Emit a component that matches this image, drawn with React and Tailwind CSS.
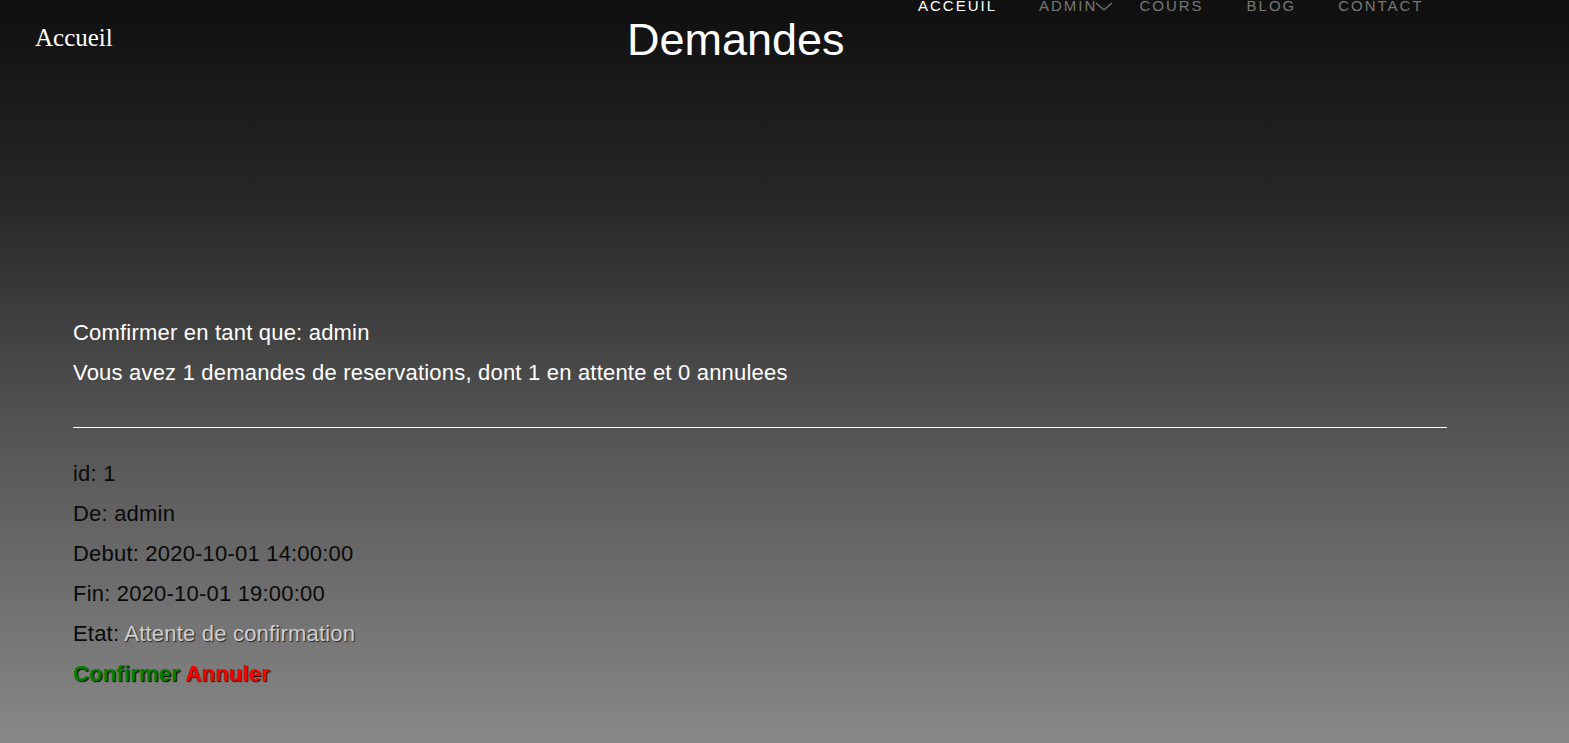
import React from "react";

const navItems = [
  { label: "Acceuil", active: true, ml: "ml-0" },
  { label: "Admin", dropdown: true, ml: "ml-[42px]" },
  { label: "Cours", ml: "ml-[26px]" },
  { label: "Blog", ml: "ml-[43px]" },
  { label: "Contact", ml: "ml-[42px]" },
];

const demande = {
  id: 1,
  de: "admin",
  debut: "2020-10-01 14:00:00",
  fin: "2020-10-01 19:00:00",
  etat: "Attente de confirmation",
};

const App = () => {
  return (
    <div className="h-[743px] overflow-hidden bg-[linear-gradient(to_bottom,#0f0f0f_0%,#272727_27%,#4f4f4f_54%,#888888_100%)] font-['Liberation_Sans',Arial,sans-serif]">
      {/* Header */}
      <div className="flex items-start h-[80px]">
        <div className="w-[627px] shrink-0 pl-[35px] pt-[25px]">
          <a className="text-white text-[25px] leading-none font-['Liberation_Serif','Times_New_Roman',serif]">
            Accueil
          </a>
        </div>
        <h1 className="w-[291px] shrink-0 pt-[17px] text-white text-[45px] leading-none">
          Demandes
        </h1>
        <nav className="flex shrink-0 items-start -mt-[3px]">
          {navItems.map((item) => (
            <a
              key={item.label}
              className={`${item.ml} flex items-start uppercase text-[15px] tracking-[2px] leading-[17px] ${
                item.active ? "text-white" : "text-[#777777]"
              }`}
            >
              {item.label}
              {item.dropdown && (
                <svg
                  width="18"
                  height="12"
                  viewBox="0 0 18 12"
                  className="-ml-[2px] mt-[3px]"
                  fill="none"
                  stroke="#777777"
                  strokeWidth="1.3"
                >
                  <polyline points="1,3 9,10 17,3" />
                </svg>
              )}
            </a>
          ))}
        </nav>
      </div>

      {/* Contenu */}
      <div className="ml-[73px] w-[1374px] pt-[233px] text-[22px] tracking-[0.2px] leading-[40px]">
        <p className="text-white">Comfirmer en tant que: admin</p>
        <p className="text-white">
          Vous avez 1 demandes de reservations, dont 1 en attente et 0 annulees
        </p>
        <hr className="mt-[34px] border-white" />
        <div className="mt-[26px] text-[#0a0a0a]">
          <p>id: {demande.id}</p>
          <p>De: {demande.de}</p>
          <p>Debut: {demande.debut}</p>
          <p>Fin: {demande.fin}</p>
          <p>
            Etat:{" "}
            <span className="text-[#cfcfcf] [text-shadow:1px_1px_1px_#222]">
              {demande.etat}
            </span>
          </p>
          <p className="font-bold">
            <a className="text-[#008000] [text-shadow:1px_1px_1px_#000]">
              Confirmer
            </a>{" "}
            <a className="text-[#ff0000] [text-shadow:1px_1px_1px_#000]">
              Annuler
            </a>
          </p>
        </div>
      </div>
    </div>
  );
};

export default App;
